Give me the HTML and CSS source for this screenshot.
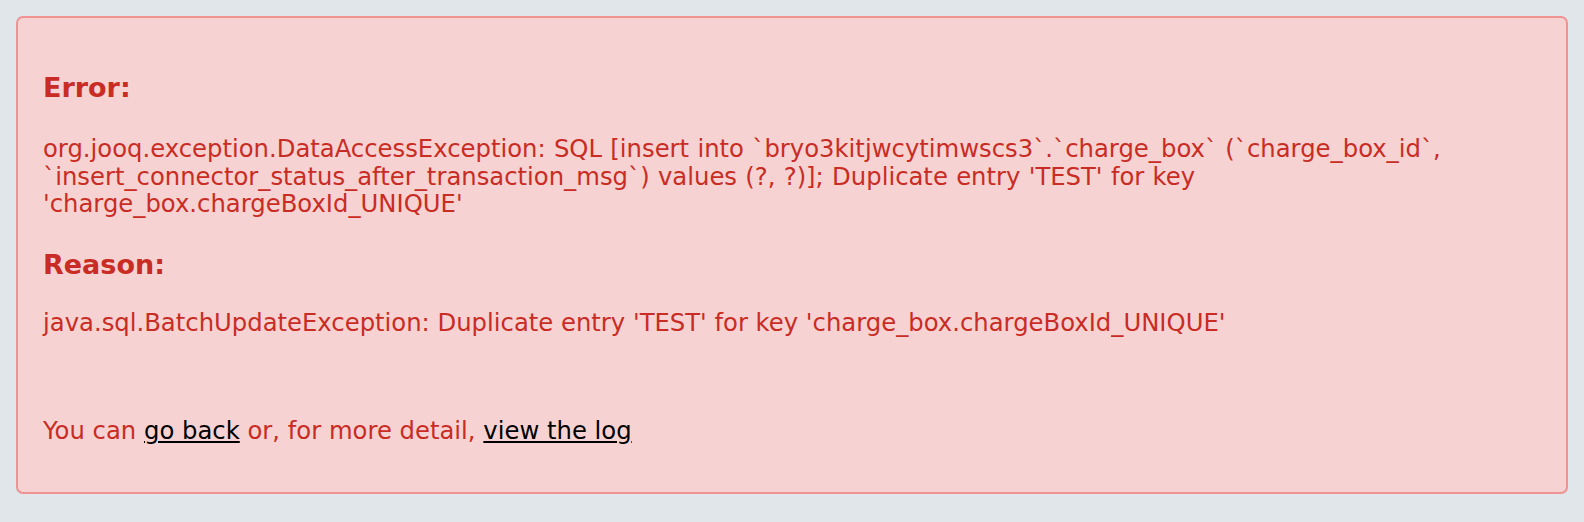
FILE: index.html
```html
<!DOCTYPE html>
<html>
<head>
<meta charset="utf-8">
<link rel="stylesheet" href="styles.css">
</head>
<body>
<div class="alert">
  <h3 class="title">Error:</h3>
  <p class="msg first">org.jooq.exception.DataAccessException: SQL [insert into `bryo3kitjwcytimwscs3`.`charge_box` (`charge_box_id`, `insert_connector_status_after_transaction_msg`) values (?, ?)]; Duplicate entry 'TEST' for key 'charge_box.chargeBoxId_UNIQUE'</p>
  <h3 class="title">Reason:</h3>
  <p class="msg second">java.sql.BatchUpdateException: Duplicate entry 'TEST' for key 'charge_box.chargeBoxId_UNIQUE'</p>
  <p class="msg footer">You can <a href="#">go back</a> or, for more detail, <a href="#">view the log</a></p>
</div>
</body>
</html>
```
FILE: styles.css
```css
html, body {
  background: #e0e6e9;
}
body {
  margin: 16px;
  font-family: "DejaVu Sans", Verdana, sans-serif;
  color: #c92c24;
}
.alert {
  background: #f6d3d2;
  border: 2px solid #f09393;
  border-radius: 7px;
  padding: 54px 25px 47px 25px;
}
.title {
  margin: 0;
  font-size: 27px;
  line-height: 32px;
  font-weight: bold;
}
.msg {
  margin: 0;
  font-size: 24.3px;
  line-height: 27.5px;
}
.first {
  margin: 31px 0;
  word-spacing: 0.6px;
}
.second {
  margin-top: 28px;
}
.footer {
  margin-top: 81px;
}
.footer a {
  color: #000;
  text-decoration: underline;
  text-decoration-thickness: 2px;
  text-underline-offset: 2px;
}
```
